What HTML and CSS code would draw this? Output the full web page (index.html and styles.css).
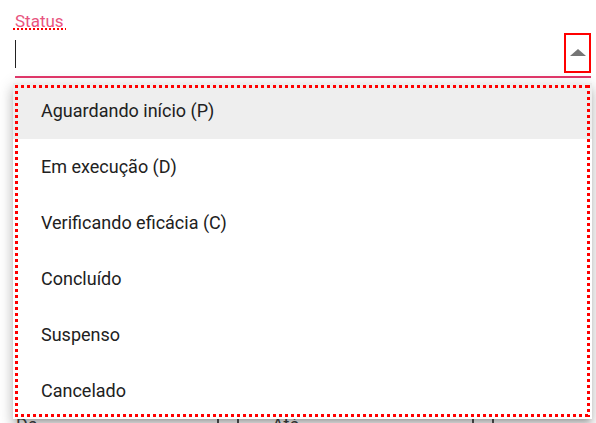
FILE: index.html
```html
<!DOCTYPE html>
<html lang="pt">
<head>
<meta charset="utf-8">
<link rel="stylesheet" href="styles.css">
</head>
<body>
<div class="page">
  <div class="field">
    <span class="label">Status</span>
    <div class="input-row">
      <span class="caret"></span>
      <span class="arrow-box"><span class="arrow"></span></span>
    </div>
  </div>
  <div class="dates">
    <span class="date-label">De</span>
    <span class="date-box"></span>
    <span class="date-label ate">Até</span>
    <span class="date-box"></span>
  </div>
  <ul class="menu">
    <li class="item active">Aguardando início (P)</li>
    <li class="item">Em execução (D)</li>
    <li class="item">Verificando eficácia (C)</li>
    <li class="item">Concluído</li>
    <li class="item">Suspenso</li>
    <li class="item">Cancelado</li>
  </ul>
</div>
</body>
</html>
```
FILE: styles.css
```css
* { box-sizing: border-box; }
html, body { margin: 0; padding: 0; background: #fff; }
body { font-family: Roboto, "Noto Sans", sans-serif; width: 596px; height: 423px; overflow: hidden; }
.page { position: relative; height: 423px; }
.field { margin-left: 15px; width: 576px; padding-top: 12px; }
.label {
  display: inline-block;
  font-size: 17px;
  line-height: 16px;
  color: #e8557f;
  padding: 0 2px 1px;
  margin-left: -2px;
  background: repeating-linear-gradient(90deg, #ff0000 0 2px, transparent 2px 4px) left bottom / 100% 2px no-repeat;
}
.input-row {
  height: 47px;
  display: flex;
  align-items: center;
  justify-content: space-between;
  border-bottom: 2px solid #e2386b;
}
.caret { width: 1px; height: 28px; background: #222; }
.arrow-box {
  width: 27px;
  height: 40px;
  border: 2px solid #ff0000;
  display: flex;
  align-items: center;
  justify-content: center;
  margin-top: -2px;
}
.arrow {
  width: 0; height: 0;
  border-left: 8px solid transparent;
  border-right: 8px solid transparent;
  border-bottom: 7px solid #757575;
}
.dates {
  display: flex;
  align-items: flex-start;
  margin-top: 336px;
  padding-left: 16px;
  font-size: 18px;
  color: #444;
}
.date-label { width: 201px; line-height: 22px; }
.date-label.ate { width: 200px; margin-left: 33px; }
.date-box { width: 22px; height: 22px; border: 2px solid #555; margin-top: 3px; }
.menu {
  position: absolute;
  left: 13px;
  top: 83px;
  width: 579px;
  height: 336px;
  margin: 0;
  padding: 0;
  list-style: none;
  background: #fff;
  box-shadow: 0 5px 5px -3px rgba(0,0,0,.2), 0 8px 10px 1px rgba(0,0,0,.14), 0 3px 14px 2px rgba(0,0,0,.12);
}
.menu::after {
  content: "";
  position: absolute;
  left: 2px; top: 2px; right: 2px; bottom: 2px;
  pointer-events: none;
  background:
    repeating-linear-gradient(90deg, #ff0000 0 3px, transparent 3px 6px) left top / 100% 3px no-repeat,
    repeating-linear-gradient(90deg, #ff0000 0 3px, transparent 3px 6px) left bottom / 100% 3px no-repeat,
    repeating-linear-gradient(180deg, #ff0000 0 3px, transparent 3px 6px) left top / 3px 100% no-repeat,
    repeating-linear-gradient(180deg, #ff0000 0 3px, transparent 3px 6px) right top / 3px 100% no-repeat;
}
.item {
  height: 56px;
  line-height: 56px;
  padding-left: 28px;
  font-size: 18px;
  color: #212121;
  white-space: nowrap;
}
.item.active { background: #eeeeee; }
```
